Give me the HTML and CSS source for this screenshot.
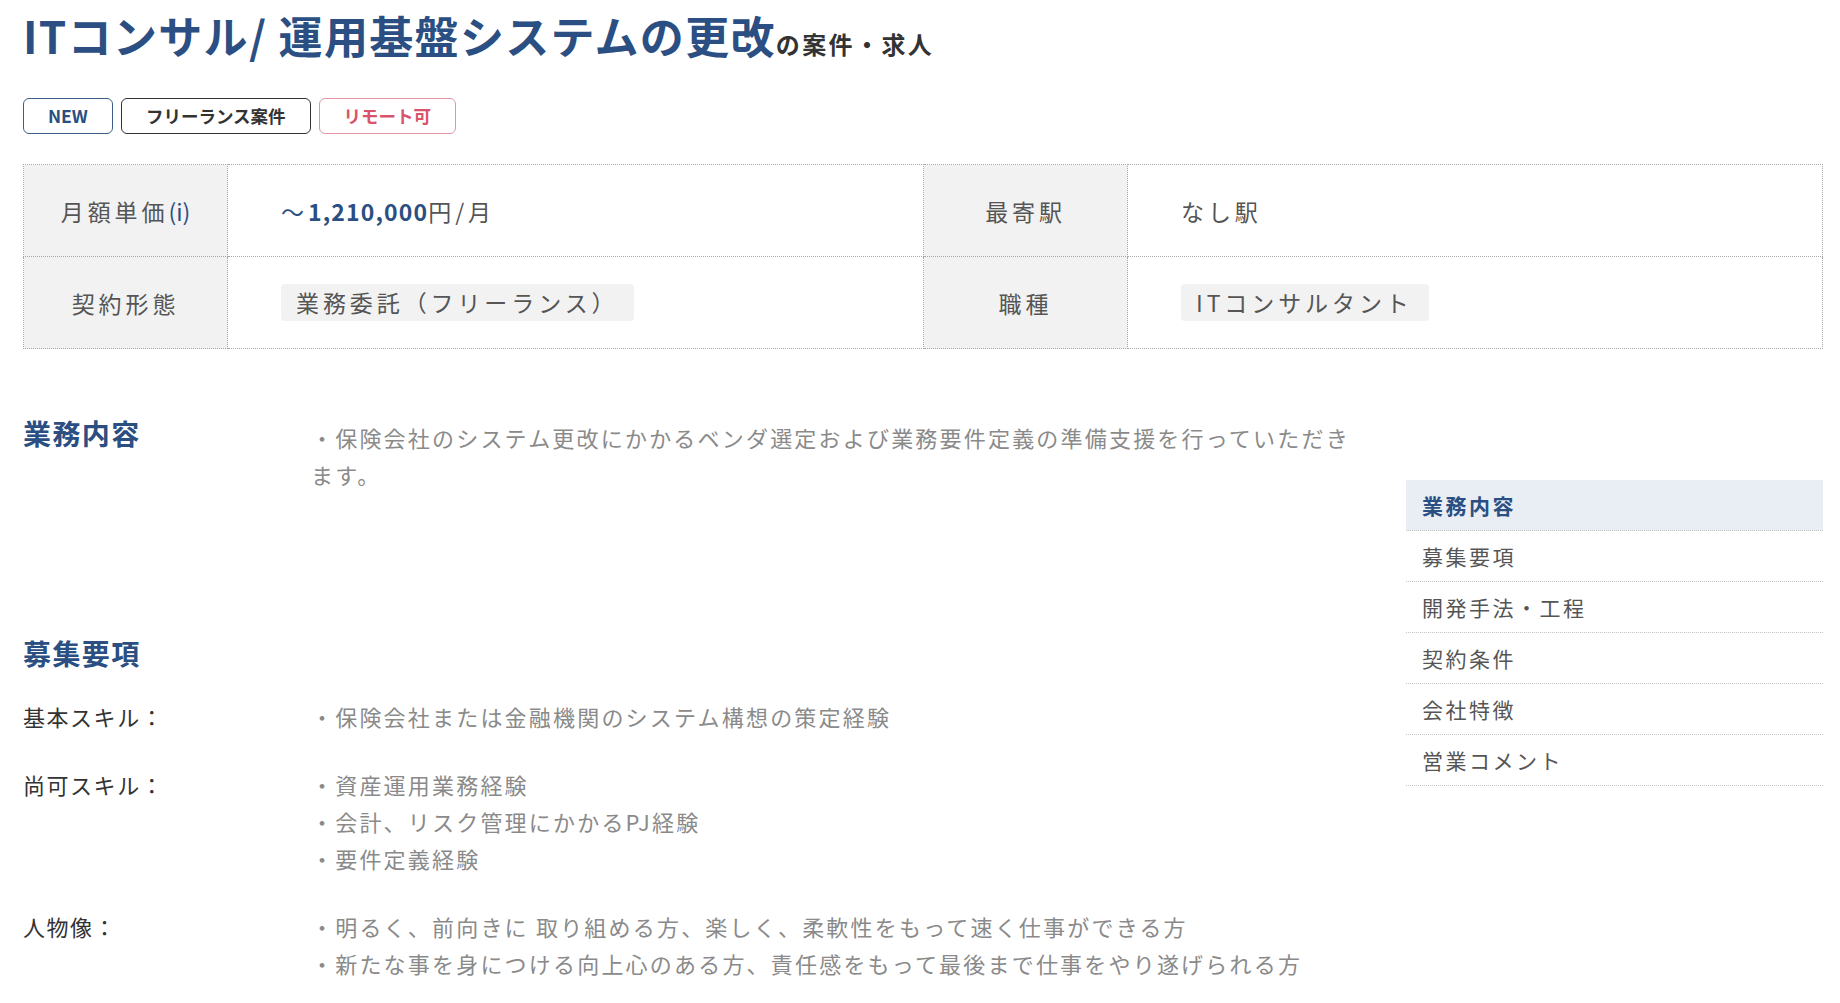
FILE: index.html
```html
<!DOCTYPE html>
<html lang="ja">
<head>
    <meta charset="UTF-8">
    <meta name="viewport" content="width=device-width, initial-scale=1.0">
    <title>ITコンサル/ 運用基盤システムの更改の案件・求人</title>
    <link rel="stylesheet" href="styles.css">
</head>
<body>
    <div class="page">
        <h1 class="job-title">ITコンサル/ 運用基盤システムの更改<span class="job-title-sub">の案件・求人</span></h1>

        <div class="tags">
            <span class="tag tag-new">NEW</span>
            <span class="tag tag-free">フリーランス案件</span>
            <span class="tag tag-remote">リモート可</span>
        </div>

        <table class="summary">
            <colgroup>
                <col class="col-head">
                <col class="col-value">
                <col class="col-head">
                <col>
            </colgroup>
            <tr>
                <th>月額単価<a class="info">(i)</a></th>
                <td><span class="price">〜<b>1,210,000</b></span>円/月</td>
                <th>最寄駅</th>
                <td>なし駅</td>
            </tr>
            <tr>
                <th>契約形態</th>
                <td><span class="chip">業務委託（フリーランス）</span></td>
                <th>職種</th>
                <td><span class="chip">ITコンサルタント</span></td>
            </tr>
        </table>

        <div class="detail">
            <div class="detail-main">
                <section class="section section-work">
                    <h2>業務内容</h2>
                    <p class="text">・保険会社のシステム更改にかかるベンダ選定および業務要件定義の準備支援を行っていただきます。</p>
                </section>

                <section class="section">
                    <h2>募集要項</h2>
                    <dl class="reqs">
                        <dt>基本スキル：</dt>
                        <dd class="text">・保険会社または金融機関のシステム構想の策定経験</dd>
                        <dt>尚可スキル：</dt>
                        <dd class="text">・資産運用業務経験<br>・会計、リスク管理にかかるPJ経験<br>・要件定義経験</dd>
                        <dt>人物像：</dt>
                        <dd class="text">・明るく、前向きに 取り組める方、楽しく、柔軟性をもって速く仕事ができる方<br>・新たな事を身につける向上心のある方、責任感をもって最後まで仕事をやり遂げられる方</dd>
                    </dl>
                </section>
            </div>

            <nav class="side-nav">
                <a class="side-item active">業務内容</a>
                <a class="side-item">募集要項</a>
                <a class="side-item">開発手法・工程</a>
                <a class="side-item">契約条件</a>
                <a class="side-item">会社特徴</a>
                <a class="side-item">営業コメント</a>
            </nav>
        </div>
    </div>
</body>
</html>
```

FILE: styles.css
```css
body {
    margin: 0;
    font-family: "Noto Sans CJK JP", "Noto Sans", sans-serif;
    color: #333;
    background-color: #fff;
}
.page {
    padding: 9px 17px 40px 23px;
}
.job-title {
    margin: 0;
    font-size: 44px;
    line-height: 52px;
    letter-spacing: 0.03em;
    font-weight: bold;
    color: #2b4f82;
}
.job-title-sub {
    font-size: 24px;
    letter-spacing: 0.1em;
    color: #333;
}
.tags {
    display: flex;
    gap: 8px;
    margin-top: 28px;
}
.tag {
    display: inline-block;
    height: 34px;
    line-height: 34px;
    padding: 0 24px;
    font-size: 17.5px;
    font-weight: bold;
    border: 1px solid #333;
    border-radius: 6px;
}
.tag-new {
    color: #2b4f82;
    border-color: #3d5f8a;
}
.tag-free {
    color: #333;
}
.tag-remote {
    color: #d9536b;
    border-color: #e393a2;
}
.summary {
    width: 100%;
    margin-top: 30px;
    border-collapse: collapse;
    table-layout: fixed;
    font-size: 23px;
    letter-spacing: 0.17em;
}
.col-head {
    width: 204px;
}
.col-value {
    width: 696px;
}
.summary th,
.summary td {
    height: 91px;
    border: 1px dotted #a8a8a8;
    padding: 0;
}
.summary th {
    background-color: #f2f2f2;
    color: #555;
    font-weight: normal;
    text-align: center;
}
.summary td {
    padding-left: 53px;
    color: #555;
}
.info {
    color: #2b4f82;
    letter-spacing: 0;
}
.price {
    color: #2b4f82;
}
.price b {
    letter-spacing: 0.05em;
}
.chip {
    display: inline-block;
    height: 37px;
    line-height: 37px;
    padding: 0 16px 0 15px;
    background-color: #f2f2f2;
    border-radius: 4px;
}
.detail {
    display: flex;
    gap: 45px;
    margin-top: 70px;
}
.detail-main {
    width: 1338px;
}
.section h2 {
    margin: 0;
    font-size: 28px;
    line-height: 34px;
    letter-spacing: 0.05em;
    color: #2b4f82;
}
.text {
    margin: 0;
    font-size: 22px;
    line-height: 37px;
    letter-spacing: 0.1em;
    color: #8a8a8a;
}
.section-work {
    display: grid;
    grid-template-columns: 288px 1fr;
    align-items: start;
    margin-bottom: 143px;
}
.section-work h2 {
    line-height: 28px;
}
.section h2 + .reqs {
    margin-top: 28px;
}
.reqs {
    display: grid;
    grid-template-columns: 288px 1fr;
    row-gap: 31px;
    margin: 0;
}
.reqs dt {
    font-size: 22px;
    line-height: 37px;
    letter-spacing: 0.07em;
    color: #333;
}
.reqs dd {
    margin: 0;
}
.side-nav {
    width: 417px;
    margin-top: 61px;
    align-self: flex-start;
}
.side-item {
    display: block;
    height: 50px;
    line-height: 50px;
    padding: 0 16px;
    font-size: 21px;
    letter-spacing: 0.12em;
    color: #555;
    border-bottom: 1px dotted #c4c4c4;
}
.side-item.active {
    background-color: #e9eef5;
    color: #2b4f82;
    font-weight: bold;
}
```
